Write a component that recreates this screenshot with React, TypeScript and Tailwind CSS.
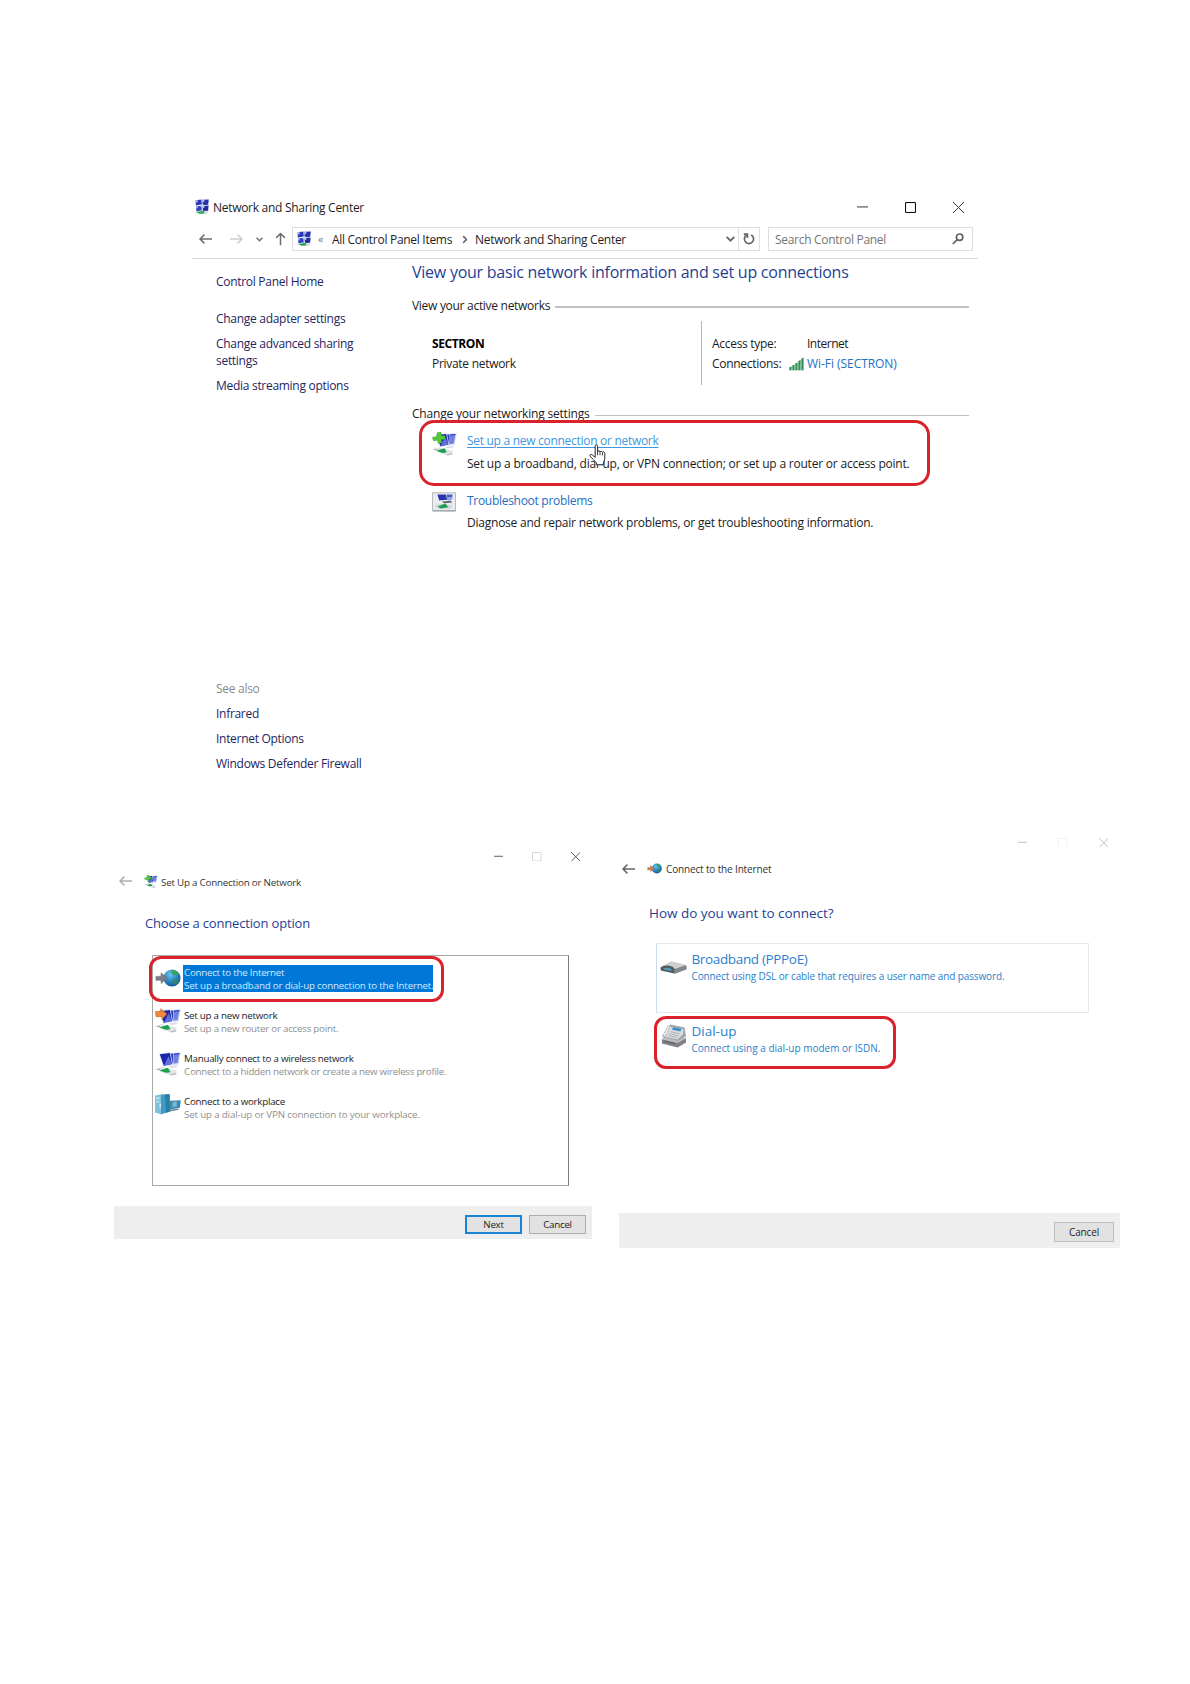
import React from 'react';
import clsx from 'clsx';

/* ---------- icons ---------- */

function NetworkCenterIcon({ className }: { className?: string }) {
  return (
    <svg viewBox="0 0 16 16" className={clsx('w-4 h-4 shrink-0', className)}>
      <path d="M1.6 1.2l5.8-.8.4 5.2-6 .9z" fill="#2a35b4" />
      <path d="M8.4.8l6.4-.4-.6 5.3-5.6.5z" fill="#2430a8" />
      <path d="M2 7.4l5.4-.7.4 5-5.4.6z" fill="#2f3fbe" />
      <path d="M8.6 6.9l6-.5-.5 5.3-5.2.4z" fill="#1d2a9e" />
      <path d="M1.6 1.2l2-.3.2 2.4-2.1.4zM8.4.8l2-.1v2.4l-1.9.2zM8.6 6.9l1.8-.2v2l-1.8.2zM2 7.4l1.6-.2.2 2-1.6.2z" fill="#a9bdf0" />
      <path d="M6 6l4-.4.2 1.6-4 .4z" fill="#cfd8f3" />
      <path d="M.2 13l6-1.6 8.4 1-2.4 2.8L7.4 15z" fill="#cfdad6" />
      <path d="M2.6 13l7.6-1.2-.4 2.6-4.6.4z" fill="#22a85c" />
    </svg>
  );
}

type Badge = 'plus' | 'arrow' | 'none';

function MonitorsIcon({ badge = 'none', className }: { badge?: Badge; className?: string }) {
  return (
    <svg viewBox="0 0 26 25" className={clsx('shrink-0', className)}>
      <path d="M13.5 2l12.3-.8-2.2 12.2-8.4 1z" fill="#d3dbf3" />
      <path d="M14.6 2.8l3.6-.3v10l-2.6.4z" fill="#3440c2" />
      <path d="M18.6 4l5.6-.5-1.6 8.4-4 .6z" fill="#6f82de" />
      <path d="M19 2.4l5.6-.4-.3 1.5-5.6.5z" fill="#2a36bd" />
      <path d="M4 2.4l11.4-1.2 2.6 12.4-9.8 2.4z" fill="#dbe2f4" />
      <path d="M4.8 3.2l10-1.1 2.2 10.8-8.2 1.9z" fill="#1c25ae" />
      <path d="M8.8 14.8L13.6 5l3.4 7.9z" fill="#5f70da" />
      <path d="M13 15.6l8-1.2 2 1.6-6.4 1z" fill="#d8dce2" />
      <path d="M.6 18.2l6-2.2 15 3.6-.6 4-5.2 1L7 21.4z" fill="#e2e6e8" />
      <path d="M15 23.2l6.4-1.4-.2 1.6-5.4 1.2z" fill="#b9c0c6" />
      <path d="M4.4 19.6l8.6-2.8 2.4 4.4-4.4.6z" fill="#18a04c" />
      <path d="M.6 18.2l3.6-.8 2 2z" fill="#9ab5a5" />
      {badge === 'plus' && (
        <path d="M5.6.4l3.6-.4.6 3.8 4 .2-.4 3.6-3.6.3.6 3.4-3.8.8-.8-3.6L1.6 9 .4 5.6l4.8-.8z" fill="#56c93a" stroke="#2f9a1a" strokeWidth=".5" />
      )}
      {badge === 'arrow' && (
        <path d="M.6 3.6l5.4-.2L5.6.8l6.2 5L7 11.4l-.2-3L1 8.8z" fill="#f08a3a" stroke="#c0601c" strokeWidth=".6" />
      )}
    </svg>
  );
}

function TroubleshootIcon() {
  return (
    <svg viewBox="0 0 24 20" className="w-6 h-5 shrink-0">
      <rect x=".5" y=".8" width="23" height="18" fill="#e9ebee" stroke="#b7bbc0" />
      <path d="M1 18.4h22.5v1H1z" fill="#8f959b" />
      <path d="M4.6 2.2h16.6v7.2l-14 .4z" fill="#f5f7fb" />
      <path d="M5.4 2.6h8.4l1.4 5.2-8 .8z" fill="#2733ae" />
      <path d="M14.4 2.6h6.2l-.6 5.4-4.4.2z" fill="#4a59c4" />
      <path d="M15 5.2l5.4-.4-.4 3.2-4.4.2z" fill="#93a2e2" />
      <path d="M10 9.6l9-.8 1 1.6-8 .8z" fill="#5d646c" />
      <path d="M2.6 13.2l7-1.8 11 2-2.4 3.6-13.2-.6z" fill="#d3dadd" />
      <path d="M5.6 14.4l7.8-3 3 3.8-7.8 1.2z" fill="#1f9c55" />
    </svg>
  );
}

function GlobeIcon({ color = '#7b7f8c', className }: { color?: string; className?: string }) {
  return (
    <svg viewBox="0 0 26 18" className={clsx('shrink-0', className)}>
      <defs>
        <radialGradient id="globe" cx=".4" cy=".3" r=".75">
          <stop offset="0" stopColor="#6fc3ea" />
          <stop offset=".5" stopColor="#2a8cc8" />
          <stop offset="1" stopColor="#174f93" />
        </radialGradient>
      </defs>
      <circle cx="17" cy="9" r="8.6" fill="url(#globe)" />
      <path d="M17.4 1c3-.2 5.4 1.4 6.8 3.6l-2 1.6-2.6-.8-2 .6-1.2-2.6z" fill="#3b9f66" />
      <path d="M18 9.8l4 .4 1.4 1.8-2.4 3.4-2.2-.6z" fill="#2f8d5c" />
      <path d="M.8 7.4l5.2-.2V3.8l6.6 5.4L6 14.6v-3.4l-5 .2z" fill={color} stroke="#5b5f6a" strokeWidth=".4" />
    </svg>
  );
}

function WorkplaceIcon() {
  return (
    <svg viewBox="0 0 26 21" className="w-[26px] h-[21px] shrink-0">
      <path d="M0 1.6L5.6.4v19.8L0 18.6z" fill="#7fc0da" />
      <path d="M5.6.4l9-.2.4 17.4-9.4 2.8z" fill="#3f9cc4" />
      <path d="M10 .4l4.6-.2.4 17.4-4 1.2z" fill="#2b7ea8" />
      <path d="M1 3.4l3.6-.6v2.4L1 5.6zM1 7.2l3.6-.4v1.4L1 8.6z" fill="#b9e2f1" />
      <path d="M4.6 9.4h1.2v4.2H4.6z" fill="#e8f6fb" />
      <path d="M15 6.8l10.8-.6-.8 7.6-10 1.8z" fill="#3d8ab0" />
      <path d="M17.4 8l4.4-.4v4.8l-4.4.6z" fill="#74b9d6" />
      <path d="M14.8 15.8l8.4-1.4.8 1.4-9 1.8z" fill="#6b8896" />
    </svg>
  );
}

function RouterIcon() {
  return (
    <svg viewBox="0 0 27 14" className="w-[27px] h-[14px] shrink-0">
      <path d="M.4 6.4L11.4.6l14.8 3.8.4 3.8L14.8 12.8 1 9.6z" fill="#9c9fa1" />
      <path d="M.4 6L11.4.6l14.8 3.4L14.4 8.2z" fill="#cccecf" />
      <path d="M14.4 8.2l11.8-4 .4 4L14.8 12.8z" fill="#85888a" />
      <path d="M.6 7c2.4-3.2 10.6-3.4 13.8.4v4.8L1.2 9.4z" fill="#4f5b62" />
      <path d="M3.4 7.4c2.2-1.2 6-1 8.2.8l-.6 1.8-7.4-1.4z" fill="#5a9cb8" />
    </svg>
  );
}

function ModemIcon() {
  return (
    <svg viewBox="0 0 26 24" className="w-[26px] h-6 shrink-0">
      <path d="M.8 15.4L6 11l19 3.6v4L16.6 23.4 1 19.6z" fill="#808285" />
      <path d="M.8 15.4L7 11l17.8 3.4-8.2 4.6z" fill="#bdbfc1" />
      <path d="M1 12.8L6.6 2.6 9.6.6l14 2.8 1.4 9-8.4 4.6z" fill="#a3a6a9" />
      <path d="M1.8 12.2L7.6 2.4l14.8 2.8-.6 5.2-5.4 5z" fill="#d9dbdc" />
      <path d="M12 3.2l8.4 1.6-.8 2.6-8.6-1.6z" fill="#3a93c9" />
      <path d="M9.6 7.8l9 2M8.6 9.8l8.8 2M7.4 11.6l8.4 2" stroke="#a3a6a9" strokeWidth=".8" />
      <path d="M1.8 11.6L7.4 1.6l2 .4-5.2 10.2z" fill="#f1f2f2" stroke="#9a9da0" strokeWidth=".5" />
      <path d="M3.4 17l10.6 2.6" stroke="#5c5f62" strokeWidth="1.2" />
    </svg>
  );
}

function WifiBarsIcon() {
  return (
    <svg viewBox="0 0 15 14" className="w-[15px] h-[14px] shrink-0">
      <path d="M0 10.4l2.6-1v3.8H0zM3 8.8l2.6-1.2v5.6H3zM6 6.8l2.6-1.4v7.8H6zM9 4.4l2.6-1.6v10.4H9zM12 2l2.6-1.6v12.8H12z" fill="#2f8d57" />
      <path d="M0 10.4l1-.4v3.2H0zM3 8.8l1-.5v4.9H3zM6 6.8l1-.5v6.9H6zM9 4.4l1-.6v9.4H9zM12 2l1-.6v11.8h-1z" fill="#74b58c" />
    </svg>
  );
}

function HandCursor() {
  return (
    <svg viewBox="0 0 17 22" className="absolute left-[167px] top-[21px] w-[17px] h-[22px]">
      <path
        d="M6.2 13.4V2.2c0-2 2.4-2 2.4 0v5.6c.2-1.4 2.4-1.2 2.4.2.4-1.2 2.2-1 2.4.4.6-1 2.4-.6 2.4 1v5.4c0 1.8-1.4 2.6-1.4 4.4v1.6H7.6v-1.6C6 17 3.4 14.6 1.2 12.4c-1-1.6.8-2.6 2.2-1.4z"
        fill="#fff"
        stroke="#222"
        strokeWidth="1"
      />
      <path d="M8.6 7.8v3.4M11 8.2v3M13.4 9v2.4" stroke="#222" strokeWidth=".9" />
    </svg>
  );
}

function Arrow({ dir = 'left', className }: { dir?: 'left' | 'right' | 'up'; className?: string }) {
  return (
    <svg
      viewBox="0 0 13 10"
      className={clsx('w-[13px] h-[10px] shrink-0', dir === 'right' && 'rotate-180', dir === 'up' && 'rotate-90', className)}
      fill="none"
      stroke="currentColor"
      strokeWidth="1.5"
    >
      <path d="M13 5H1M5.4.6L1 5l4.4 4.4" />
    </svg>
  );
}

function Chevron({ className }: { className?: string }) {
  return (
    <svg viewBox="0 0 8 5" className={clsx('shrink-0', className)} fill="none" stroke="currentColor" strokeWidth="1.6">
      <path d="M.6.6L4 4 7.4.6" />
    </svg>
  );
}

function CaptionButtons({ className, size, color, boxColor }: { className: string; size: string; color: string; boxColor: string }) {
  return (
    <div className={clsx('flex items-center', className)}>
      <svg viewBox="0 0 10 10" className={clsx(size, color)} stroke="currentColor">
        <path d="M0 4.5h10" strokeWidth=".9" />
      </svg>
      <svg viewBox="0 0 10 10" className={clsx(size, boxColor)} fill="none" stroke="currentColor">
        <path d="M.5.5h9v9h-9z" strokeWidth=".9" />
      </svg>
      <svg viewBox="0 0 10 10" className={clsx(size, color)} stroke="currentColor">
        <path d="M0 0l10 10M10 0L0 10" strokeWidth=".9" />
      </svg>
    </div>
  );
}

/* ---------- control panel window ---------- */

const SIDE_LINKS = ['Change adapter settings', 'Change advanced sharing settings', 'Media streaming options'];
const SEE_ALSO = ['Infrared', 'Internet Options', 'Windows Defender Firewall'];

function AddressBar() {
  return (
    <div className="flex items-center h-[36px] pb-[3px] border-b border-[#d9d9d9] text-[#6d6d6d]">
      <Arrow className="ml-[7px]" />
      <Arrow dir="right" className="ml-[18px] text-[#cfcfcf]" />
      <Chevron className="w-[7px] h-[5px] ml-[13px]" />
      <Arrow dir="up" className="ml-[11px]" />
      <div className="flex items-center w-[468px] h-[24px] ml-[5px] border border-[#dedede] text-[#1e1e1e]">
        <NetworkCenterIcon className="ml-[3px]" />
        <span className="ml-[6px] w-[14px] -mt-[2px] text-[11px] text-[#777]">«</span>
        <span className="w-[129px]">All Control Panel Items</span>
        <Chevron className="w-[8px] h-[5px] -rotate-90 text-[#666]" />
        <span className="ml-[6px] grow">Network and Sharing Center</span>
        <Chevron className="w-[9px] h-[6px] mr-[3px] text-[#666]" />
        <div className="flex items-center justify-center w-[21px] h-full border-l border-[#dedede] text-[#666]">
          <svg viewBox="0 0 12 12" className="w-3 h-3" fill="none" stroke="currentColor" strokeWidth="1.7">
            <path d="M8.2 1.9a4.6 4.6 0 1 1-4.6.1" />
            <path d="M.8 1.2h3.6v3.8" />
          </svg>
        </div>
      </div>
      <div className="flex items-center justify-between w-[205px] h-[24px] ml-2 pl-[6px] pr-[8px] border border-[#dedede]">
        <span className="text-[#757575]">Search Control Panel</span>
        <svg viewBox="0 0 12 12" className="w-3 h-3 text-[#606060]" fill="none" stroke="currentColor" strokeWidth="1.7">
          <circle cx="7.6" cy="4.2" r="3.2" />
          <path d="M5.2 6.6L.8 11" />
        </svg>
      </div>
    </div>
  );
}

function SectionLabel({ children, className, line }: { children: React.ReactNode; className: string; line: string }) {
  return (
    <div className={clsx('flex items-center gap-[5px] h-[17px]', className)}>
      <span className="text-[#1b1b1b]">{children}</span>
      <div className={clsx('grow', line)} />
    </div>
  );
}

function NetworkCenterWindow() {
  return (
    <section className="w-[786px] h-[637px] ml-[192px] text-[12px] leading-[17px] tracking-[-0.29px]">
      <div className="flex items-center h-[30px] pb-px pl-[2px] pr-[14px]">
        <NetworkCenterIcon className="-mt-px" />
        <span className="ml-[3px] grow text-[#1e1e1e]">Network and Sharing Center</span>
        <CaptionButtons className="gap-[37px]" size="w-[11px] h-[11px]" color="text-[#333]" boxColor="text-black" />
      </div>
      <AddressBar />

      <div className="flex">
        <nav className="flex flex-col w-[220px] pl-6 pt-[14px] text-[#25255f]">
          <a>Control Panel Home</a>
          <div className="flex flex-col gap-2 w-[142px] mt-5">
            {SIDE_LINKS.map((link) => (
              <a key={link}>{link}</a>
            ))}
          </div>
          <div className="flex flex-col gap-2 mt-[286px]">
            <span className="text-[#8a8a8a]">See also</span>
            {SEE_ALSO.map((link) => (
              <a key={link}>{link}</a>
            ))}
          </div>
        </nav>

        <div className="w-[557px]">
          <h1 className="text-[16px] leading-[26px] tracking-[-0.245px] text-[#1f3f93] whitespace-nowrap">
            View your basic network information and set up connections
          </h1>
          <SectionLabel className="mt-[12px]" line="h-[2px] mt-[3px] bg-[#c0c0c0]">View your active networks</SectionLabel>

          <div className="flex h-16 mt-[7px]">
            <div className="w-[289px] pl-5 pt-[14px]">
              <div className="font-bold tracking-[-0.4px] text-black">SECTRON</div>
              <div className="mt-[3px] text-[#222]">Private network</div>
            </div>
            <div className="flex flex-col gap-[3px] pt-[14px] pl-[10px] border-l border-[#b5b5b5] text-[#1b1b1b]">
              <div className="flex">
                <span className="w-[95px]">Access type:</span>
                <span className="tracking-[-0.5px]">Internet</span>
              </div>
              <div className="flex items-center">
                <span className="w-[77px]">Connections:</span>
                <WifiBarsIcon />
                <a className="ml-[3px] tracking-[-0.05px] text-[#2270c0]">Wi-Fi (SECTRON)</a>
              </div>
            </div>
          </div>

          <SectionLabel className="mt-[20px] tracking-[-0.2px]" line="h-px mt-[3px] bg-[#c0c0c0]">
            Change your networking settings
          </SectionLabel>
          <div className="relative flex w-[511px] h-[66px] ml-[7px] -mt-[2px] pl-[10px] pt-[9px] rounded-[15px] border-[3px] border-[#da222c]">
            <MonitorsIcon badge="plus" className="w-[25px] h-6" />
            <div className="relative ml-[10px] whitespace-nowrap">
              <div className="text-[#3f97dd] underline decoration-1 underline-offset-2">Set up a new connection or network</div>
              <div className="mt-[6px] tracking-[-0.21px] text-[#1b1b1b]">
                Set up a broadband, dial-up, or VPN connection; or set up a router or access point.
              </div>
            </div>
            <HandCursor />
          </div>
          <div className="flex mt-[6px] pl-5">
            <TroubleshootIcon />
            <div className="ml-[11px] whitespace-nowrap">
              <div className="text-[#2270c0]">Troubleshoot problems</div>
              <div className="mt-[5px] tracking-[-0.23px] text-[#1b1b1b]">
                Diagnose and repair network problems, or get troubleshooting information.
              </div>
            </div>
          </div>
        </div>
      </div>
    </section>
  );
}

/* ---------- set up wizard ---------- */

const OPTIONS = [
  {
    title: 'Connect to the Internet',
    desc: 'Set up a broadband or dial-up connection to the Internet.',
    descTracking: 'tracking-[-0.185px]',
    icon: <GlobeIcon className="w-[26px] h-[18px] mt-1" />,
    selected: true,
  },
  {
    title: 'Set up a new network',
    desc: 'Set up a new router or access point.',
    descTracking: 'tracking-[-0.24px]',
    icon: <MonitorsIcon badge="arrow" className="w-[26px] h-[25px]" />,
  },
  {
    title: 'Manually connect to a wireless network',
    desc: 'Connect to a hidden network or create a new wireless profile.',
    descTracking: 'tracking-[-0.265px]',
    icon: <MonitorsIcon className="w-[26px] h-[25px]" />,
  },
  {
    title: 'Connect to a workplace',
    desc: 'Set up a dial-up or VPN connection to your workplace.',
    descTracking: 'tracking-[-0.16px]',
    icon: <WorkplaceIcon />,
  },
];

function SetupWizard() {
  return (
    <section className="w-[478px] mt-[14px] text-[9.75px] leading-[14px] tracking-[-0.25px]">
      <CaptionButtons
        className="justify-end gap-[29px] h-[25px] pr-[12px]"
        size="w-[9.5px] h-[9.5px]"
        color="text-[#444]"
        boxColor="text-[#cfcfcf]"
      />
      <div className="flex items-center h-6 pl-[5px]">
        <Arrow className="w-[11px] h-[9px] text-[#b0b0b0]" />
        <MonitorsIcon badge="plus" className="w-[14px] h-[13px] ml-3" />
        <span className="ml-[3px] mt-[3px] tracking-[-0.2px] text-[#333]">Set Up a Connection or Network</span>
      </div>
      <h2 className="mt-[20px] pl-[31px] text-[13px] leading-5 tracking-[-0.17px] text-[#1f3f93]">Choose a connection option</h2>

      <div className="relative w-[417px] h-[231px] mt-[22px] ml-[38px] pt-[9px] pl-[2px] border border-[#a8a8a8] border-r-[#7d7d7d]">
        <div className="flex flex-col gap-[15px]">
          {OPTIONS.map((option) => (
            <div key={option.title} className="flex h-7 whitespace-nowrap">
              <div className="w-7">{option.icon}</div>
              <div className={clsx('w-[250px]', option.selected && 'h-[27px] bg-[#0078d7] text-[#cfe9ff]')}>
                <div className={clsx('pl-px pt-px', !option.selected && 'text-[#1b1b1b]')}>{option.title}</div>
                <div className={clsx('pl-px -mt-px', option.descTracking, !option.selected && 'text-[#8f8f8f]')}>{option.desc}</div>
              </div>
            </div>
          ))}
        </div>
        <div className="absolute -left-[4px] top-0 w-[295px] h-[46px] rounded-[12px] border-[3px] border-[#da222c]" />
      </div>

      <div className="flex items-center justify-end gap-[7px] h-[33px] mt-[20px] pr-[6px] pt-[3px] bg-[#eeeeee] text-[#222]">
        <button className="w-[57px] h-[19px] leading-[15px] border-2 border-[#1a84d4] bg-[#e2e2e2]">Next</button>
        <button className="w-[57px] h-[19px] pt-px border border-[#adadad] bg-[#e2e2e2]">Cancel</button>
      </div>
    </section>
  );
}

/* ---------- connect wizard ---------- */

function ConnectWizard() {
  return (
    <section className="w-[501px] text-[10px] leading-[14px] tracking-[-0.15px]">
      <CaptionButtons
        className="justify-end gap-[31px] h-[25px] pr-[12px]"
        size="w-[9.5px] h-[9.5px]"
        color="text-[#b5b5b5]"
        boxColor="text-[#f0f0f0]"
      />
      <div className="flex items-center h-6 mt-[2px] pl-[3px]">
        <Arrow className="w-[11px] h-[9px] text-[#666]" />
        <GlobeIcon color="#e07a3c" className="w-[15px] h-[11px] ml-[12px] -mt-[2px]" />
        <span className="ml-[4px] text-[#333]">Connect to the Internet</span>
      </div>
      <h2 className="mt-[22px] pl-[30px] text-[13.5px] leading-5 tracking-[-0.03px] text-[#1f3f93]">How do you want to connect?</h2>

      <div className="flex w-[433px] h-[70px] mt-5 ml-[37px] pl-[3px] pt-[6px] border border-[#e3e9ed] border-l-[#c9ddec] text-[#2a80cb]">
        <div className="w-[31.5px] pt-[11px]">
          <RouterIcon />
        </div>
        <div>
          <div className="text-[13.5px] leading-[18px] tracking-[-0.35px]">Broadband (PPPoE)</div>
          <div className="mt-px tracking-[-0.12px]">Connect using DSL or cable that requires a user name and password.</div>
        </div>
      </div>

      <div className="flex w-[242px] h-[53px] mt-[3px] ml-[35px] pl-[4px] pt-[3px] rounded-[12px] border-[3px] border-[#da222c] text-[#2a80cb]">
        <div className="w-[30.5px] pt-[2px]">
          <ModemIcon />
        </div>
        <div className="whitespace-nowrap">
          <div className="text-[13.5px] leading-[18px] tracking-normal">Dial-up</div>
          <div className="mt-px tracking-normal">Connect using a dial-up modem or ISDN.</div>
        </div>
      </div>

      <div className="flex items-center justify-end h-[35px] mt-36 pr-[6px] pt-[2px] bg-[#eeeeee] text-[#222]">
        <button className="w-[60px] h-[20px] border border-[#bdbdbd] bg-[#e2e2e2]">Cancel</button>
      </div>
    </section>
  );
}

export default function App() {
  return (
    <main className="w-[1190px] h-[1684px] pt-[193px] bg-white font-['Open_Sans','Noto_Sans',sans-serif]">
      <NetworkCenterWindow />
      <div className="flex items-start gap-[27px] pl-[114px]">
        <SetupWizard />
        <ConnectWizard />
      </div>
    </main>
  );
}
